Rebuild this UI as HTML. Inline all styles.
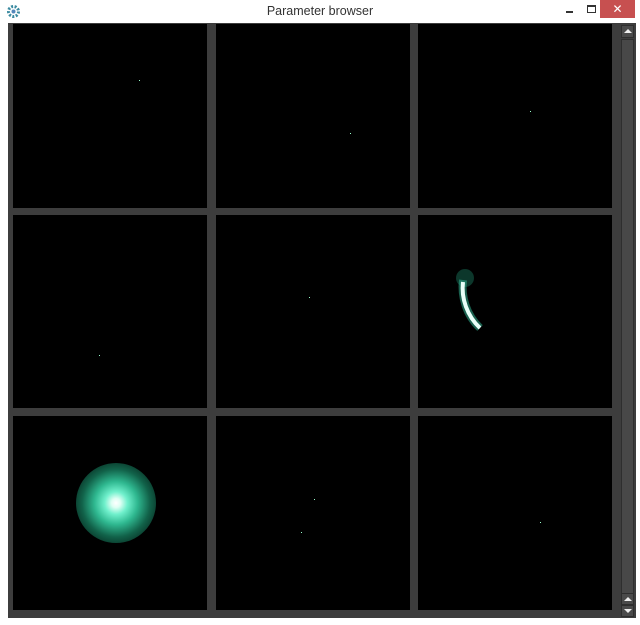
<!DOCTYPE html>
<html><head><style>
body{margin:0;width:640px;height:625px;background:#fff;position:relative;overflow:hidden;font-family:"Liberation Sans",sans-serif}
.t{position:absolute;top:4px;left:0;width:640px;text-align:center;font-size:12.5px;color:#333}
.x{position:absolute;left:600px;top:0;width:35px;height:18px;background:#c75050;color:#fff;text-align:center;font-size:12px;line-height:18px}
.c{position:absolute;left:8px;top:23px;width:628px;height:595px;background:#3d3d3d}
.p{position:absolute;background:#000}
.d{position:absolute;width:1px;height:1px;background:#9fc}
.sb{position:absolute;background:#4a4a4a;border:1px solid #2e2e2e}
</style></head><body>
<div class="t">Parameter browser</div>
<svg style="position:absolute;left:6px;top:4px" width="15" height="15"><circle cx="7.5" cy="7.5" r="5" fill="none" stroke="#3a8aa0" stroke-width="3" stroke-dasharray="2 1.5"/><circle cx="7.5" cy="7.5" r="2" fill="#58b"/></svg>
<div style="position:absolute;left:566px;top:11px;width:7px;height:2px;background:#333"></div>
<div style="position:absolute;left:587px;top:5px;width:7px;height:5px;border:1px solid #333;border-top-width:2px"></div>
<div class="x">✕</div>
<div class="c">
<div class="p" style="left:5px;top:1px;width:194px;height:184px"></div>
<div class="p" style="left:208px;top:1px;width:194px;height:184px"></div>
<div class="p" style="left:410px;top:1px;width:194px;height:184px"></div>
<div class="p" style="left:5px;top:192px;width:194px;height:193px"></div>
<div class="p" style="left:208px;top:192px;width:194px;height:193px"></div>
<div class="p" style="left:410px;top:192px;width:194px;height:193px"></div>
<div class="p" style="left:5px;top:393px;width:194px;height:194px"></div>
<div class="p" style="left:208px;top:393px;width:194px;height:194px"></div>
<div class="p" style="left:410px;top:393px;width:194px;height:194px"></div>
<div class="sb" style="left:613px;top:2px;width:11px;height:11px"><div style="margin:3px auto;width:0;height:0;border-left:4px solid transparent;border-right:4px solid transparent;border-bottom:4px solid #eee"></div></div>
<div class="sb" style="left:613px;top:16px;width:11px;height:553px;background:#484848"></div>
<div class="sb" style="left:613px;top:570px;width:11px;height:10px"><div style="margin:3px auto;width:0;height:0;border-left:4px solid transparent;border-right:4px solid transparent;border-bottom:4px solid #eee"></div></div>
<div class="sb" style="left:613px;top:582px;width:11px;height:10px"><div style="margin:3px auto;width:0;height:0;border-left:4px solid transparent;border-right:4px solid transparent;border-top:4px solid #eee"></div></div>
</div>
<div class="d" style="left:139px;top:80px"></div>
<div class="d" style="left:350px;top:133px"></div>
<div class="d" style="left:530px;top:111px"></div>
<div class="d" style="left:309px;top:297px"></div>
<div class="d" style="left:99px;top:355px"></div>
<div class="d" style="left:314px;top:499px"></div>
<div class="d" style="left:301px;top:532px"></div>
<div class="d" style="left:540px;top:522px"></div>
<div style="position:absolute;left:76px;top:463px;width:80px;height:80px;border-radius:50%;background:radial-gradient(circle at 50% 50%,#fff 0,#dffff4 8%,#70f0cc 20%,#2fb890 38%,rgba(25,140,105,.7) 60%,rgba(15,100,75,.4) 82%,rgba(0,0,0,0) 100%)"></div>
<svg style="position:absolute;left:440px;top:260px" width="60" height="80"><circle cx="25" cy="18" r="9" fill="#1a7a60" opacity=".45"/><path d="M23 20 C21 36,26 55,40 68" stroke="#30b090" stroke-width="8" fill="none" opacity=".55"/><path d="M23 22 C21 38,27 56,40 68" stroke="#e8fff8" stroke-width="4" fill="none"/></svg>
</body></html>
